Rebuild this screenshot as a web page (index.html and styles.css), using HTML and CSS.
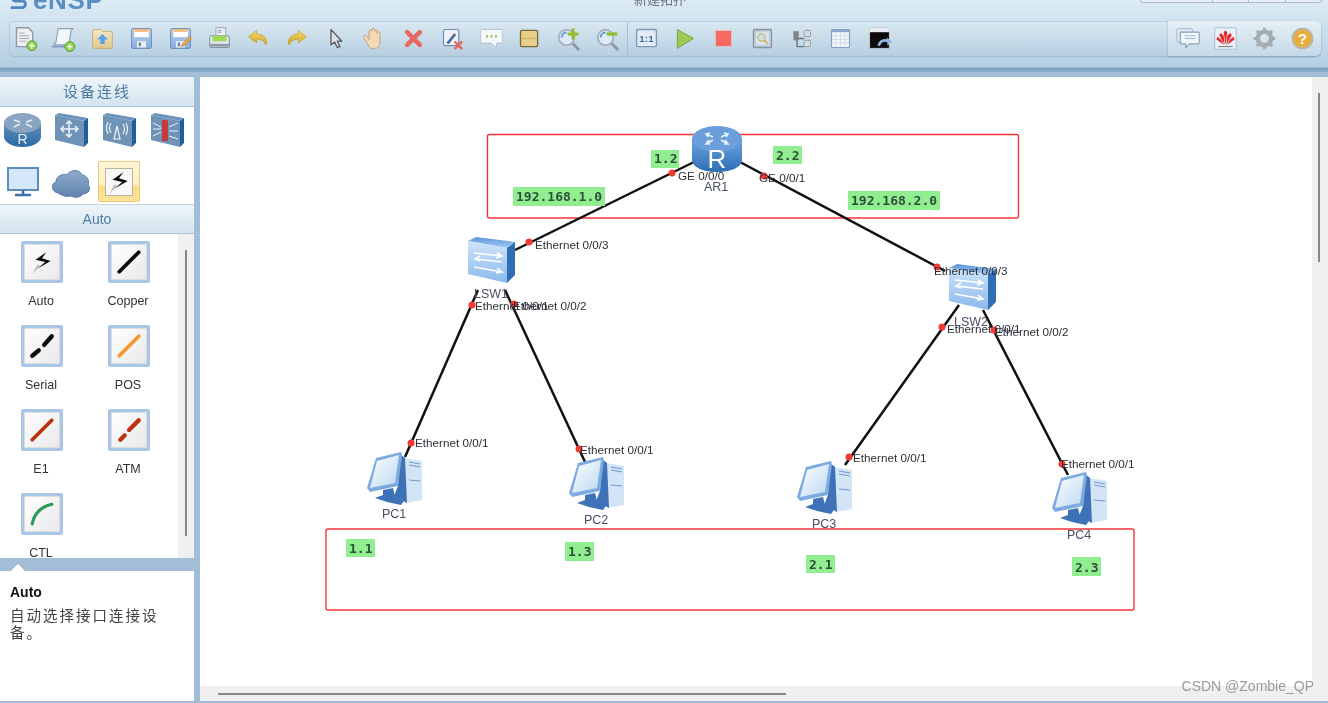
FILE: index.html
```html
<!DOCTYPE html>
<html lang="zh">
<head>
<meta charset="utf-8">
<title>eNSP</title>
<link rel="stylesheet" href="styles.css">
</head>
<body>
<svg class="defs" width="0" height="0">
  <defs>
    <linearGradient id="gBlue" x1="0" y1="0" x2="0" y2="1"><stop offset="0" stop-color="#cfe4fb"/><stop offset="1" stop-color="#8ab8ec"/></linearGradient>
    <linearGradient id="gRouter" x1="0" y1="0" x2="0" y2="1"><stop offset="0" stop-color="#6aa3e2"/><stop offset="1" stop-color="#2f6db4"/></linearGradient>
    <linearGradient id="gDevR" x1="0" y1="0" x2="0" y2="1"><stop offset="0" stop-color="#5d8db8"/><stop offset="1" stop-color="#2c6ca6"/></linearGradient>
    <linearGradient id="gCloud" x1="0" y1="0" x2="0" y2="1"><stop offset="0" stop-color="#8fabcc"/><stop offset="1" stop-color="#5f82ad"/></linearGradient>
    <linearGradient id="gTop" x1="0" y1="0" x2="0" y2="1"><stop offset="0" stop-color="#5d96d8"/><stop offset="1" stop-color="#a5cbf3"/></linearGradient>
    <linearGradient id="gScreen" x1="0" y1="0" x2="1" y2="1"><stop offset="0" stop-color="#fff"/><stop offset="1" stop-color="#bcd7f2"/></linearGradient>
    <linearGradient id="gFloppy" x1="0" y1="0" x2="0" y2="1"><stop offset="0" stop-color="#bcd3ea"/><stop offset="1" stop-color="#88addb"/></linearGradient>
    <linearGradient id="gFolder" x1="0" y1="0" x2="0" y2="1"><stop offset="0" stop-color="#f6e8c6"/><stop offset="1" stop-color="#e0c88e"/></linearGradient>
    <linearGradient id="gArrow" x1="0" y1="0" x2="0" y2="1"><stop offset="0" stop-color="#f4dc6c"/><stop offset="1" stop-color="#cda628"/></linearGradient>

    <symbol id="pc" viewBox="0 0 55 53">
      <polygon points="37,6 55,9 55,48 39,51" fill="#d3e4f6"/>
      <polygon points="33,2 38,6 40,51 27,44 31,34" fill="#3e72b6"/>
      <path d="M42 10l11 2M42 13l11 2M42 28l11 1" stroke="#6f9bd0" stroke-width="1" fill="none"/>
      <polygon points="16,38 26,36 28,44 37,49 34,53 20,50 8,46 16,43" fill="#3e72b6"/>
      <polygon points="9,6 34,0 35,3 31,34 3,40 0,36" fill="#7cabdf"/>
      <polygon points="10,9 32,3 28,31 3,36" fill="url(#gScreen)"/>
    </symbol>
    <symbol id="sw" viewBox="0 0 47 46">
      <polygon points="0,4 8,0 47,5 39,11" fill="url(#gTop)"/>
      <polygon points="0,4 39,11 39,46 0,37" fill="url(#gBlue)"/>
      <polygon points="39,11 47,5 47,38 39,46" fill="#2f6db4"/>
      <path d="M6 16l28 3m-5-3l5 3-6 2M34 25L7 22m5-3l-5 3 5 2M6 30l28 5m-5-4l5 4-6 1" stroke="#fff" stroke-width="1.6" fill="none"/>
    </symbol>
    <symbol id="router" viewBox="0 0 50 46">
      <path d="M0 13v21c0 7 11 12 25 12s25-5 25-12V13z" fill="url(#gRouter)"/>
      <ellipse cx="25" cy="13" rx="25" ry="13" fill="#6a9fdc"/>
      <path d="M14 8l7 3m-3-4l-4 1 2 3M36 8l-7 3m3-4l4 1-2 3M14 18l7-4m-4 0l-3 4 4 0M36 18l-7-4m4 0l3 4-4 0" stroke="#e6f1fc" stroke-width="1.6" fill="none"/>
    </symbol>
    <symbol id="bolt" viewBox="0 0 24 24">
      <path d="M10 16L3 23l5-9z" fill="#a8a8a8" opacity=".75"/>
      <path d="M16 3L6 10l9 2-7 6 12-7-8-2.500z" fill="#0b0b0b"/>
    </symbol>
    <symbol id="floppy" viewBox="0 0 24 24">
      <rect x="1" y="1" width="22" height="22" rx="1.500" fill="url(#gFloppy)" stroke="#5d86bb"/>
      <rect x="4" y="1.500" width="16" height="9" fill="#fff"/>
      <rect x="4" y="1.500" width="16" height="3" fill="#f4b672"/>
      <rect x="7" y="15" width="10" height="7" fill="#e9edf1"/>
      <rect x="9" y="16.500" width="2.500" height="4" fill="#6b7f95"/>
    </symbol>
    <symbol id="zoomglass" viewBox="0 0 24 24">
      <path d="M15 15l7 7" stroke="#8f98a1" stroke-width="3" stroke-linecap="round"/>
      <circle cx="10" cy="10" r="8" fill="#dcebf7" stroke="#a9b3bc" stroke-width="2"/>
      <path d="M5 10a5 5 0 0 1 5-5" stroke="#5d9ad6" stroke-width="2" fill="none"/>
    </symbol>
  </defs>
</svg>

<div class="app">
  <header class="header">
    <div class="titlebar">
      <div class="logo">
        <svg class="logo-mark" viewBox="0 0 24 16"><path d="M20 1H7C3 1 3 7 7 7h8c4 0 4 7-1 7H2" fill="none" stroke="#4f86c1" stroke-width="3"/></svg>
        <span class="logo-text">eNSP</span>
      </div>
      <div class="doc-title">新建拓扑</div>
      <div class="win-buttons"><span class="win-btn win-btn-a"></span><span class="win-btn"></span><span class="win-btn"></span><span class="win-btn"></span></div>
    </div>
    <div class="toolbar">
      <div class="tool-main">
        <div class="tool-group tool-group-a">
          <span class="tool"><svg viewBox="0 0 30 30"><path d="M5 3h13l5 5v16H5z" fill="#eef1f4" stroke="#8b97a4" stroke-width="1.500"/><path d="M8 9h6M8 12h11M8 15h11M8 18h8" stroke="#9aa5b1"/><circle cx="22" cy="23" r="5.500" fill="#8fd14f" stroke="#4f9a2c"/><path d="M22 20v6M19 23h6" stroke="#fff" stroke-width="1.500"/></svg></span>
          <span class="tool"><svg viewBox="0 0 30 30"><path d="M9 4h17c-2 1-3 3-3 5l-2 13H4c2-1 3-3 3-5z" fill="#f4f7fa" stroke="#8aa3bd" stroke-width="1.300"/><path d="M2 24h19" stroke="#7fa0c2" stroke-width="2"/><circle cx="22" cy="24" r="5.500" fill="#8fd14f" stroke="#4f9a2c"/><path d="M22 21v6M19 24h6" stroke="#fff" stroke-width="1.500"/></svg></span>
          <span class="tool"><svg viewBox="0 0 30 30"><path d="M4 7q0-2 2-2h7l2 2h9q2 0 2 2v15q0 2-2 2H6q-2 0-2-2z" fill="url(#gFolder)" stroke="#c2a96c"/><path d="M15 10l6 6h-3.500v5h-5v-5H9z" fill="#5aa2ea"/></svg></span>
          <span class="tool"><svg viewBox="-3 -3 30 30"><use href="#floppy" width="24" height="24"/></svg></span>
          <span class="tool"><svg viewBox="-3 -3 30 30"><use href="#floppy" width="24" height="24"/><path d="M13 21l2-4 7-7 2 2-7 7z" fill="#f1b72e" stroke="#b5552a" stroke-width=".7"/></svg></span>
          <span class="tool"><svg viewBox="0 0 30 30"><rect x="11" y="3" width="11" height="12" fill="#eceff2" stroke="#9aa3ad"/><path d="M13 6h4M13 8h4" stroke="#8e98a2"/><rect x="4" y="12" width="22" height="13" rx="1.500" fill="#dfe5ea" stroke="#7a8a9a"/><rect x="7" y="12" width="16" height="6" fill="#9fdc55"/><rect x="4" y="21" width="22" height="3" fill="#8c9aa8"/></svg></span>
          <span class="tool"><svg viewBox="0 0 30 30"><path d="M13 6L4 13l9 7v-4c5 0 8 1 9 5 1 1 2 1 2-1 0-7-5-10-11-10z" fill="url(#gArrow)" stroke="#c2a22c" stroke-width=".8"/></svg></span>
          <span class="tool"><svg viewBox="0 0 30 30"><path d="M17 6l9 7-9 7v-4c-5 0-8 1-9 5-1 1-2 1-2-1 0-7 5-10 11-10z" fill="url(#gArrow)" stroke="#c2a22c" stroke-width=".8"/></svg></span>
          <span class="tool"><svg viewBox="0 0 30 30"><path d="M10 5v17l4-3 3 6 3-1-3-6h5z" fill="#dfe2e5" stroke="#5b5f64" stroke-width="1.500" stroke-linejoin="round"/></svg></span>
          <span class="tool"><svg viewBox="0 0 30 30"><path d="M8 22c-2-3-4-6-5-9 0-2 2-2 3-1l3 4V7c0-2 3-2 3 0V5c0-2 3-2 3 0v2c0-2 3-2 3 0v2c0-2 3-2 3 0v10c0 4-2 7-6 7h-3c-2 0-3-2-4-4z" fill="#f4d9b5" stroke="#c29b6c"/></svg></span>
          <span class="tool"><svg viewBox="0 0 30 30"><path d="M8 8l14 14M22 8L8 22" stroke="#e8675f" stroke-width="5" stroke-linecap="round"/></svg></span>
          <span class="tool"><svg viewBox="0 0 30 30"><rect x="5" y="5" width="17" height="18" rx="2" fill="#eef2f6" stroke="#6f8bb0" stroke-width="1.300"/><path d="M8 20l9-11 2 2-8 10z" fill="#4a6d9a"/><path d="M18 19l7 7M25 19l-7 7" stroke="#e8675f" stroke-width="2.800" stroke-linecap="round"/></svg></span>
          <span class="tool"><svg viewBox="0 0 30 30"><path d="M4 5h22q1 0 1 1v13q0 1-1 1h-5l-1 5-5-5H4q-1 0-1-1V6q0-1 1-1z" fill="#f6f9fc" stroke="#b3c2d1"/><path d="M9 12.500h2M14 12.500h2M19 12.500h2" stroke="#86b94b" stroke-width="2.500"/></svg></span>
          <span class="tool"><svg viewBox="0 0 30 30"><rect x="5" y="6" width="19" height="18" rx="1.500" fill="#e8d08a" stroke="#76683f" stroke-width="1.500"/><rect x="7" y="14" width="15" height="2" fill="#d6b964"/></svg></span>
          <span class="tool"><svg viewBox="0 0 30 30"><use href="#zoomglass" x="2" y="3" width="26" height="26"/><path d="M20 4v12M14 10h12" stroke="#94bd2e" stroke-width="3.500"/></svg></span>
          <span class="tool"><svg viewBox="0 0 30 30"><use href="#zoomglass" x="2" y="3" width="26" height="26"/><path d="M14 10h12" stroke="#94bd2e" stroke-width="3.500"/></svg></span>
        </div>
        <div class="tool-group tool-group-b">
          <span class="tool"><svg viewBox="0 0 30 30"><rect x="4" y="5" width="22" height="19" rx="1.500" fill="#e2ebf3" stroke="#7b9abb" stroke-width="1.500"/><text x="15" y="19" class="one-one">1:1</text></svg></span>
          <span class="tool"><svg viewBox="0 0 30 30"><path d="M7 5l18 10L7 26z" fill="#9ccb55" stroke="#69a43a"/></svg></span>
          <span class="tool"><svg viewBox="0 0 30 30"><rect x="6" y="6" width="18" height="18" rx="1" fill="#f66a63" stroke="#d9cfc9"/></svg></span>
          <span class="tool"><svg viewBox="0 0 30 30"><rect x="5" y="5" width="20" height="20" rx="1" fill="#c3cfda" stroke="#8394a5" stroke-width="1.500"/><rect x="8" y="8" width="14" height="14" fill="#d9e4ee"/><circle cx="14" cy="14" r="4" fill="#cbe1f3" stroke="#d5b152" stroke-width="1.300"/><path d="M17 17l4 4" stroke="#c99f3e" stroke-width="1.500"/></svg></span>
          <span class="tool"><svg viewBox="0 0 30 30"><path d="M10 7v17h8M10 15h8" fill="none" stroke="#6b7279" stroke-width="1.600"/><rect x="6" y="7" width="6" height="10" fill="#7d848b"/><rect x="18" y="6" width="7" height="7" rx="1.500" fill="#d6dde3" stroke="#8b949c"/><rect x="18" y="17" width="7" height="7" rx="1.500" fill="#d6dde3" stroke="#8b949c"/></svg></span>
          <span class="tool"><svg viewBox="0 0 30 30"><rect x="5" y="5" width="20" height="20" rx="1" fill="#f3f6fa" stroke="#7f9cc4" stroke-width="1.300"/><rect x="5" y="5" width="20" height="3" fill="#8ba7cc"/><path d="M5 12h20M5 16h20M5 20h20M10 8v17M15 8v17M20 8v17" stroke="#c6d4e6" stroke-width=".8"/></svg></span>
          <span class="tool"><svg viewBox="0 0 30 30"><rect x="4" y="3" width="22" height="23" rx="1" fill="#0c0c0c" stroke="#c8d0d8"/><rect x="4" y="3" width="22" height="5" fill="#e8edf2"/><path d="M14 23q3-8 11-5" stroke="#8bb7e0" stroke-width="3" fill="none"/><path d="M23 14l6 4-5 5z" fill="#8bb7e0"/></svg></span>
        </div>
      </div>
      <div class="tool-right">
        <span class="tool"><svg viewBox="0 0 30 30"><rect x="3" y="4" width="18" height="15" rx="2" fill="#dbe7f1" stroke="#a3b6c8"/><path d="M8 8h19q1 0 1 1v11q0 1-1 1H17l-4 4v-4H8q-1 0-1-1V9q0-1 1-1z" fill="#f2f6fa" stroke="#8ba0b5" stroke-width="1.300"/><path d="M12 12h12M12 15h12" stroke="#8fb0ce"/></svg></span>
        <span class="tool"><svg viewBox="0 0 30 30"><rect x="3" y="3" width="24" height="24" rx="1.500" fill="#e9f0f7" stroke="#a8c2de" stroke-width="1.200"/><g fill="#e02a2a"><path d="M15 22l-2-14 2-2 2 2z"/><path d="M14 22L8 11l2-2 3 3z"/><path d="M16 22l6-11-2-2-3 3z"/><path d="M13 22L5 16l1-3 4 3z"/><path d="M17 22l8-6-1-3-4 3z"/></g><path d="M7 24h16" stroke="#6b6b6b"/></svg></span>
        <span class="tool"><svg viewBox="0 0 30 30"><circle cx="15" cy="15" r="7.500" fill="none" stroke="#a5adb3" stroke-width="5"/><path d="M15 3v5M15 22v5M3 15h5M22 15h5M6.500 6.500l3.500 3.500M20 20l3.500 3.500M23.500 6.500L20 10M10 20l-3.500 3.500" stroke="#a5adb3" stroke-width="3.500"/></svg></span>
        <span class="tool"><svg viewBox="0 0 30 30"><circle cx="15" cy="15" r="11" fill="#e9ad3c" stroke="#b7b4a7" stroke-width="2"/><text x="15" y="21" class="help-mark">?</text></svg></span>
      </div>
    </div>
  </header>

  <main class="main">
    <aside class="side">
      <h2 class="side-head">设备连线</h2>
      <div class="dev-grid">
        <span class="dev"><svg class="dev-r" viewBox="0 0 37 34"><path d="M0 10v14c0 5 8 10 18.500 10S37 29 37 24V10z" fill="url(#gDevR)"/><ellipse cx="18.500" cy="10" rx="18.500" ry="10" fill="#8aa5c1"/><path d="M10 7l6 2m12-2l-6 2M10 14l6-3m12 3l-6-3" stroke="#e4ecf4" stroke-width="1.500"/><text x="18.500" y="31" class="r-mark">R</text></svg></span>
        <span class="dev"><svg class="dev-s" viewBox="0 0 34 34"><polygon points="1,2 5,0 34,5 30,8" fill="#6d94b8"/><polygon points="1,2 30,8 30,34 1,27" fill="#6f93b6"/><polygon points="30,8 34,5 34,30 30,34" fill="#1e5f9c"/><path d="M15 8v16M7 16h17M12 11l3-3 3 3M12 21l3 3 3-3M10 13l-3 3 3 3M21 13l3 3-3 3" stroke="#eef3f8" stroke-width="1.500" fill="none"/></svg></span>
        <span class="dev"><svg class="dev-s" viewBox="0 0 34 34"><polygon points="1,2 5,0 34,5 30,8" fill="#6d94b8"/><polygon points="1,2 30,8 30,34 1,27" fill="#6f93b6"/><polygon points="30,8 34,5 34,30 30,34" fill="#1e5f9c"/><path d="M15 13l-3 13h6zM9 10q-3 5 0 10M21 11q3 5 0 10M6 9q-3 6 0 12M24 10q3 6 0 12" stroke="#eef3f8" stroke-width="1.200" fill="none"/></svg></span>
        <span class="dev"><svg class="dev-s" viewBox="0 0 34 34"><polygon points="1,2 5,0 34,5 30,8" fill="#6d94b8"/><polygon points="1,2 30,8 30,34 1,27" fill="#6f93b6"/><polygon points="30,8 34,5 34,30 30,34" fill="#1e5f9c"/><rect x="12" y="7" width="6" height="21" fill="#c83a3a"/><path d="M3 10l8 4M3 16h8M3 23l8-4M19 14l9-4M19 18h9M19 23l9 3" stroke="#eef3f8"/></svg></span>
        <span class="dev"><svg class="dev-m" viewBox="0 0 32 30"><rect x="1" y="1" width="30" height="22" fill="#d6e7f9" stroke="#5d8cc0" stroke-width="2"/><path d="M16 23v4M8 28h16" stroke="#3f6fa6" stroke-width="2.500"/></svg></span>
        <span class="dev"><svg class="dev-c" viewBox="0 0 40 32"><path d="M7 27C1 26-1 18 5 16c0-6 7-9 11-7 3-6 13-6 15 0 5 0 8 6 6 10 4 4 0 9-5 9-3 4-9 4-12 2-4 1-9 0-13-3z" fill="url(#gCloud)" stroke="#5d80aa"/></svg></span>
        <span class="dev dev-selected"><span class="sel-inner"><svg viewBox="0 0 24 24"><use href="#bolt"/></svg></span></span>
      </div>
      <h3 class="side-sub">Auto</h3>
      <div class="link-pane">
        <div class="link-grid">
          <div class="link"><span class="tile"><svg viewBox="0 0 24 24"><use href="#bolt"/></svg></span><span class="link-name">Auto</span></div>
          <div class="link"><span class="tile"><svg viewBox="0 0 24 24"><path d="M3 21L21 3" stroke="#0c0c0c" stroke-width="3.500" stroke-linecap="round"/></svg></span><span class="link-name">Copper</span></div>
          <div class="link"><span class="tile"><svg viewBox="0 0 24 24"><path d="M3 21l6-5M14 11l7-8" stroke="#0c0c0c" stroke-width="4" stroke-linecap="round"/></svg></span><span class="link-name">Serial</span></div>
          <div class="link"><span class="tile"><svg viewBox="0 0 24 24"><path d="M3 21L21 3" stroke="#f69a2e" stroke-width="3.500" stroke-linecap="round"/></svg></span><span class="link-name">POS</span></div>
          <div class="link"><span class="tile"><svg viewBox="0 0 24 24"><path d="M3 21L21 3" stroke="#bb3312" stroke-width="3.500" stroke-linecap="round"/></svg></span><span class="link-name">E1</span></div>
          <div class="link"><span class="tile"><svg viewBox="0 0 24 24"><path d="M4 21l4-4M12 12l9-9" stroke="#bb3312" stroke-width="4" stroke-linecap="round"/></svg></span><span class="link-name">ATM</span></div>
          <div class="link"><span class="tile"><svg viewBox="0 0 24 24"><path d="M3 21C5 11 12 5 21 3" stroke="#2e9a5a" stroke-width="3" stroke-linecap="round" fill="none"/></svg></span><span class="link-name">CTL</span></div>
        </div>
        <div class="side-scroll"><span class="side-thumb"></span></div>
      </div>
      <div class="desc-gap"></div>
      <div class="desc">
        <strong class="desc-title">Auto</strong>
        <p class="desc-text">自动选择接口连接设备。</p>
      </div>
    </aside>

    <section class="canvas">
      <div class="canvas-row">
        <svg class="stage" viewBox="200 77 1112 609">
          <g class="zone">
            <rect x="487.500" y="134.500" width="531" height="83.500" rx="2"/>
            <rect x="326" y="529" width="808" height="81" rx="2"/>
          </g>
          <g class="links">
            <path d="M515 250L694 162"/>
            <path d="M740 162L945 271"/>
            <path d="M478 290L405 457"/>
            <path d="M505 290L585 462"/>
            <path d="M959 305L845 465"/>
            <path d="M983 310L1068 475"/>
          </g>
          <use href="#router" x="692" y="126" width="50" height="46"/>
          <text x="717" y="168" class="router-r">R</text>
          <use href="#sw" x="468" y="237" width="47" height="46"/>
          <use href="#sw" x="949" y="264" width="47" height="46"/>
          <use href="#pc" x="367" y="452" width="55" height="53"/>
          <use href="#pc" x="569" y="457" width="55" height="53"/>
          <use href="#pc" x="797" y="461" width="55" height="53"/>
          <use href="#pc" x="1052" y="472" width="55" height="53"/>
          <g class="dots">
            <circle cx="672" cy="173" r="3.500"/><circle cx="764" cy="176" r="3.500"/>
            <circle cx="529" cy="242" r="3.500"/><circle cx="937" cy="267" r="3.500"/>
            <circle cx="472" cy="305" r="3.500"/><circle cx="514" cy="304" r="3.500"/>
            <circle cx="942" cy="327" r="3.500"/><circle cx="994" cy="330" r="3.500"/>
            <circle cx="411" cy="443" r="3.500"/><circle cx="579" cy="449" r="3.500"/>
            <circle cx="849" cy="457" r="3.500"/><circle cx="1062" cy="464" r="3.500"/>
          </g>
          <g class="port">
            <text x="678" y="180">GE 0/0/0</text>
            <text x="759" y="182">GE 0/0/1</text>
            <text x="535" y="249">Ethernet 0/0/3</text>
            <text x="934" y="275">Ethernet 0/0/3</text>
            <text x="475" y="310">Ethernet 0/0/1</text>
            <text x="513" y="310">Ethernet 0/0/2</text>
            <text x="947" y="333">Ethernet 0/0/1</text>
            <text x="995" y="336">Ethernet 0/0/2</text>
            <text x="415" y="447">Ethernet 0/0/1</text>
            <text x="580" y="454">Ethernet 0/0/1</text>
            <text x="853" y="462">Ethernet 0/0/1</text>
            <text x="1061" y="468">Ethernet 0/0/1</text>
          </g>
          <g class="node-name">
            <text x="704" y="191">AR1</text>
            <text x="474" y="298">LSW1</text>
            <text x="954" y="326">LSW2</text>
            <text x="382" y="518">PC1</text>
            <text x="584" y="524">PC2</text>
            <text x="812" y="528">PC3</text>
            <text x="1067" y="539">PC4</text>
          </g>
          <g class="tag-bg">
            <rect x="513" y="187" width="92" height="19"/>
            <rect x="651" y="150" width="28" height="18"/>
            <rect x="773" y="146" width="29" height="18"/>
            <rect x="848" y="191" width="92" height="19"/>
            <rect x="346" y="539" width="29" height="18"/>
            <rect x="565" y="542" width="29" height="19"/>
            <rect x="806" y="555" width="29" height="18"/>
            <rect x="1072" y="557" width="29" height="19"/>
          </g>
          <g class="tag">
            <text x="516" y="201">192.168.1.0</text>
            <text x="654" y="163">1.2</text>
            <text x="776" y="160">2.2</text>
            <text x="851" y="205">192.168.2.0</text>
            <text x="349" y="553">1.1</text>
            <text x="568" y="556">1.3</text>
            <text x="809" y="569">2.1</text>
            <text x="1075" y="572">2.3</text>
          </g>
        </svg>
        <div class="v-scroll"><span class="v-thumb"></span></div>
      </div>
      <div class="h-scroll"><span class="h-thumb"></span></div>
      <span class="watermark">CSDN @Zombie_QP</span>
    </section>
  </main>
</div>
</body>
</html>
```

FILE: styles.css
```css
* { box-sizing: border-box; }
html, body { margin: 0; padding: 0; }
body { font-family: "Liberation Sans", Arial, sans-serif; background: #a3bdd6; overflow: hidden; }
.defs { position: absolute; }

.app {
  width: 1328px; height: 703px; overflow: hidden;
  display: flex; flex-direction: column;
  background: #a3bdd6; filter: blur(.55px);
}

/* header */
.header {
  height: 72px; flex: none; display: flex; flex-direction: column;
  background: linear-gradient(180deg, #dcecf5 0, #c8dcea 50%, #b3cde1 93%, #7a9dbc 95%, #8fadc9 100%);
}
.titlebar { height: 21px; flex: none; display: flex; align-items: flex-start; overflow: hidden; }
.logo { display: flex; align-items: flex-start; width: 634px; padding-left: 9px; flex: none; margin-top: -11px; }
.logo-mark { width: 22px; height: 16px; margin-top: 5px; flex: none; }
.logo-text { font-size: 26px; line-height: 23px; font-weight: 700; color: #5b8fc4; margin-left: 2px; letter-spacing: .6px; }
.doc-title { font: 13px/13px "Noto Sans CJK SC", sans-serif; color: #6b7680; width: 506px; flex: none; margin-top: -8px; }
.win-buttons { display: flex; width: 182px; height: 3px; border: 1px solid #a9bccb; border-top: 0; border-radius: 0 0 5px 5px; background: #e9f1f7; flex: none; }
.win-btn { flex: 1; border-left: 1px solid #a9bccb; }
.win-btn-a { flex: 2; border-left: 0; }

.toolbar { height: 35px; flex: none; display: flex; padding-left: 9px; }
.tool-main {
  width: 1159px; flex: none; display: flex;
  border: 1px solid #b4cbdc; border-right: 0; border-radius: 5px 0 0 5px;
  background: linear-gradient(180deg, #d9e8f1, #b8d0e2);
  box-shadow: 0 1px 1px rgba(120,150,180,.35);
}
.tool-group { display: flex; align-items: center; gap: 8.85px; }
.tool-group-a { width: 617px; flex: none; }
.tool-group-b { border-left: 1px solid #a9c0d3; padding-left: 3px; }
.tool { width: 30px; height: 30px; flex: none; display: flex; align-items: center; justify-content: center; }
.tool svg { width: 27px; height: 27px; display: block; }
.tool-right {
  width: 153px; flex: none; display: flex; align-items: center; gap: 8.6px; padding-left: 4px;
  border-radius: 0 6px 6px 0;
  background: linear-gradient(180deg, #e6f0f6, #c4d9e8);
  box-shadow: 0 1px 2px rgba(90,120,150,.6);
}
.one-one { font: 700 11px "Liberation Sans", sans-serif; fill: #3f6ea3; text-anchor: middle; }
.help-mark { font: 700 17px "Liberation Sans", sans-serif; fill: #fff; text-anchor: middle; }

/* main */
.main { flex: 1; min-height: 0; display: flex; gap: 6px; padding: 5px 0 2px; }
.side { width: 194px; flex: none; display: flex; flex-direction: column; background: #fff; }
.side-head {
  height: 30px; flex: none; margin: 0; text-align: center;
  font: 400 15px/27px "Noto Sans CJK SC", sans-serif; letter-spacing: 2px; color: #4e7ba6;
  background: linear-gradient(180deg, #eef5fa, #d5e4ef); border-bottom: 1px solid #a9c3da;
}
.dev-grid { height: 97px; flex: none; display: grid; grid-template-columns: 47px 48px 48px 48px; grid-template-rows: 46px 51px; justify-items: center; align-items: center; }
.dev { display: flex; align-items: center; justify-content: center; }
.dev-r { width: 37px; height: 34px; margin-left: -2px; }
.dev-s { width: 34px; height: 34px; }
.dev-m { width: 32px; height: 30px; margin: 7px 0 0 -1px; }
.dev-c { width: 40px; height: 32px; margin-top: 6px; }
.dev-selected {
  width: 42px; height: 41px; margin-top: 6px;
  border: 1px solid #ecc878; border-radius: 2px;
  background: linear-gradient(180deg, #fff6d8 0, #fff0c0 60%, #fbdc82 61%, #fbe39a 100%);
}
.sel-inner { width: 28px; height: 28px; background: #f8f8f8; border: 1px solid #b9b39c; display: block; }
.sel-inner svg { width: 26px; height: 26px; display: block; }
.r-mark { font: 14px "Liberation Sans", sans-serif; fill: #e6eef6; text-anchor: middle; }
.side-sub {
  height: 30px; flex: none; margin: 0; text-align: center;
  font: 400 14px/28px "Liberation Sans", sans-serif; color: #4e7ba6;
  background: linear-gradient(180deg, #eef5fa, #d5e4ef);
  border-top: 1px solid #c9d3db; border-bottom: 1px solid #a9c3da;
}
.link-pane { height: 324px; flex: none; display: flex; overflow: hidden; }
.link-grid { flex: 1; display: grid; grid-template-columns: 42px 42px; column-gap: 45px; grid-auto-rows: 84px; padding: 7px 0 0 21px; }
.link { width: 42px; display: flex; flex-direction: column; align-items: center; }
.tile {
  width: 42px; height: 42px; flex: none; display: flex; align-items: center; justify-content: center;
  background: linear-gradient(135deg, #fff, #e8e8e8);
  border: 3px solid #a9c6e4; border-radius: 2px; box-shadow: inset 0 0 0 1px #dcdcdc;
}
.tile svg { width: 26px; height: 26px; }
.link-name { font-size: 12.500px; line-height: 14px; margin-top: 11px; color: #2f3136; white-space: nowrap; margin-left: -2px; }
.side-scroll { width: 16px; flex: none; background: #f0f0f0; padding: 16px 0 0 7px; }
.side-thumb { display: block; width: 2px; height: 286px; background: #86888a; }
.desc-gap { height: 13px; flex: none; background: #a3bdd6; position: relative; }
.desc-gap::after {
  content: ""; position: absolute; left: 11px; bottom: 0; width: 0; height: 0;
  border: 7px solid transparent; border-top: 0; border-bottom-color: #fff;
}
.desc { flex: 1; padding: 13px 10px 0; }
.desc-title { display: block; font-size: 14px; line-height: 16px; color: #111; }
.desc-text { margin: 6px 0 0; font: 14.500px/17px "Noto Sans CJK SC", sans-serif; letter-spacing: 2px; color: #444; width: 160px; }

/* canvas */
.canvas { flex: 1; min-width: 0; position: relative; display: flex; flex-direction: column; background: #fff; }
.canvas-row { flex: 1; min-height: 0; display: flex; }
.stage { width: 1112px; height: 609px; display: block; flex: none; background: #fff; }
.v-scroll { flex: 1; background: #f0f0f0; padding: 16px 0 0 6px; }
.v-thumb { display: block; width: 2px; height: 169px; background: #86888a; }
.h-scroll { height: 15px; flex: none; background: #f0f0f0; padding: 7px 0 0 18px; }
.h-thumb { display: block; width: 568px; height: 2px; background: #86888a; }
.watermark { position: absolute; right: 14px; bottom: 7px; font-size: 14px; line-height: 16px; color: #9a9a9a; white-space: nowrap; }

.zone rect { fill: none; stroke: #f4343a; stroke-width: 1.400; }
.links path { stroke: #111; stroke-width: 2.500; fill: none; }
.dots circle { fill: #f23a35; }
.port text { font-size: 11.700px; fill: #2c2f36; }
.node-name text { font-size: 12.500px; fill: #4a4f66; }
.router-r { font-size: 26px; fill: #fff; text-anchor: middle; }
.tag-bg rect { fill: #90ee90; }
.tag text { font: 700 13px "DejaVu Sans Mono", monospace; fill: #2f4f3a; }
```
